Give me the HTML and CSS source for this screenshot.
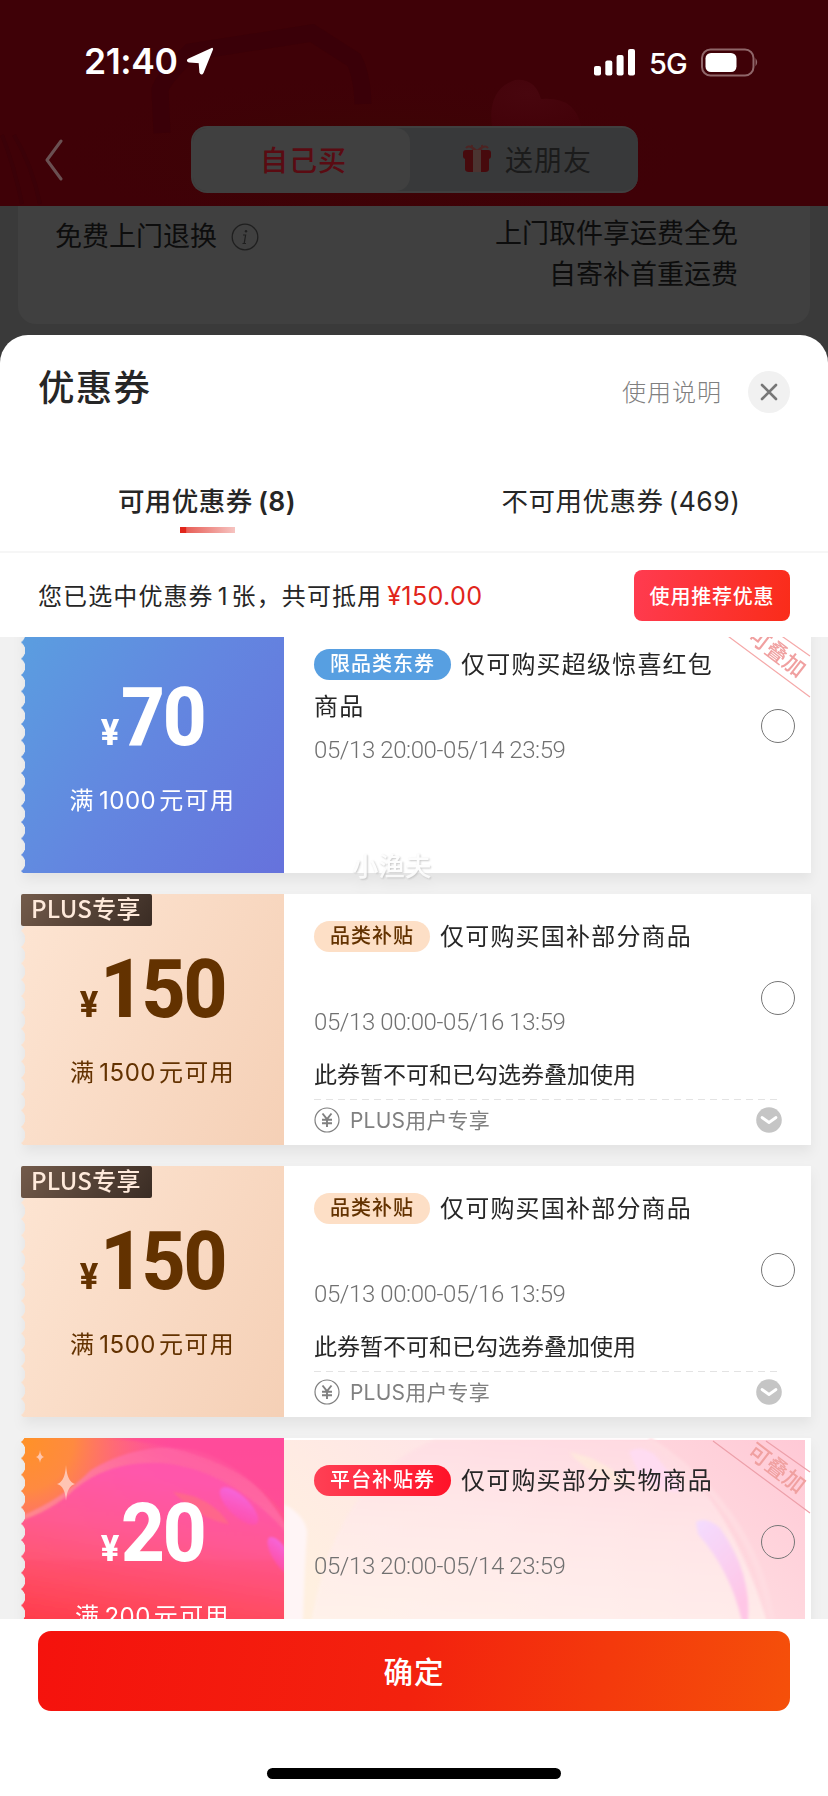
FILE: index.html
```html
<!DOCTYPE html>
<html lang="zh-CN">
<head>
<meta charset="utf-8">
<title>优惠券</title>
<link rel="stylesheet" href="styles.css">
</head>
<body>
<header class="top">
  <svg class="top-art" width="828" height="206" viewBox="0 0 828 206" aria-hidden="true">
    <defs>
      <radialGradient id="warm" cx=".45" cy=".75" r=".4"><stop offset="0" stop-color="#3c0703"/><stop offset="1" stop-color="#3f0107" stop-opacity="0"/></radialGradient>
      <radialGradient id="heart" cx=".4" cy=".3" r=".8"><stop offset="0" stop-color="#48060e"/><stop offset="1" stop-color="#430209"/></radialGradient>
    </defs>
    <rect width="828" height="206" fill="url(#warm)"/>
    <path d="M162 133 L160 90 Q162 80 190 52 L312 33 L354 60 Q362 75 363 104" fill="none" stroke="#3a0008" stroke-width="17"/>
    <path d="M492 126 Q487 90 515 80 Q535 78 541 99 Q575 96 581 126 Z" fill="url(#heart)"/>
    <path d="M2 135 Q14 165 22 204 M14 135 Q32 165 40 204" stroke="#3b0108" stroke-width="4" fill="none"/>
  </svg>
  <div class="status">
    <span class="clock">21:40</span>
    <svg class="loc" width="30" height="30" viewBox="0 0 30 30"><path d="M27 2 L17.5 25.5 Q16.5 27.5 15.5 25.3 L14.7 15.2 L4.3 14.5 Q1.8 13.5 4 12.4 Z" fill="#fff" stroke="#fff" stroke-width="2.2" stroke-linejoin="round"/></svg>
    <svg class="signal" width="42" height="27" viewBox="0 0 42 27" fill="#fff"><rect x="0" y="17" width="7" height="9.5" rx="2"/><rect x="11.3" y="11.5" width="7" height="15" rx="2"/><rect x="22.6" y="6" width="7" height="20.5" rx="2"/><rect x="34" y="0" width="7" height="26.5" rx="2"/></svg>
    <span class="net">5G</span>
    <svg class="battery" width="59" height="29" viewBox="0 0 59 29"><rect x="1" y="1.5" width="51.500" height="26" rx="8.500" fill="none" stroke="#8f6669" stroke-width="2"/><rect x="4.500" y="5" width="31" height="19" rx="5.500" fill="#fff"/><path d="M54.500 10 Q58 14.500 54.500 18.500Z" fill="#8f6669"/></svg>
  </div>
  <div class="nav">
    <svg class="back" width="20" height="42" viewBox="0 0 20 42"><path d="M17 2 L3 21 L17 40" fill="none" stroke="#6a5052" stroke-width="3" stroke-linecap="round" stroke-linejoin="round"/></svg>
    <div class="segment">
      <div class="seg seg-on">自己买</div>
      <div class="seg seg-off">
        <svg width="28" height="29" viewBox="0 0 28 29"><path d="M14 7 Q6 0 3 4 M14 7 Q22 0 25 4 M14 7 Q8 6 9 1 M14 7 Q20 6 19 1" fill="none" stroke="#4d2322" stroke-width="2"/><rect x="0" y="6" width="28" height="9" rx="3" fill="#470a0d"/><path d="M2 14 H26 V25 Q26 28 22 28 H6 Q2 28 2 25Z" fill="#470a0d"/><rect x="10" y="6" width="8" height="22" fill="#4b3431"/></svg>
        <span>送朋友</span>
      </div>
    </div>
  </div>
</header>

<section class="behind">
  <div class="behind-card">
    <div class="service">免费上门退换
      <svg width="28" height="28" viewBox="0 0 28 28"><circle cx="14" cy="14" r="12.800" fill="none" stroke="#1f1f1f" stroke-width="1.300"/><circle cx="15" cy="8.300" r="1.200" fill="#1f1f1f"/><path d="M12 12 H14.600 L13.200 20.300 M11.500 20.500 H15" fill="none" stroke="#1f1f1f" stroke-width="1.200"/></svg>
    </div>
    <div class="policy">上门取件享运费全免<br>自寄补首重运费</div>
  </div>
</section>

<main class="sheet">
  <div class="sheet-head">
    <h1>优惠券</h1>
    <span class="help">使用说明</span>
    <span class="close"><svg width="18" height="18" viewBox="0 0 18 18"><path d="M2 2 L16 16 M16 2 L2 16" stroke="#777" stroke-width="2.600" stroke-linecap="round"/></svg></span>
  </div>
  <nav class="tabs">
    <div class="tab tab-on"><span>可用优惠券<b>(8)</b></span><i></i></div>
    <div class="tab"><span>不可用优惠券<b>(469)</b></span></div>
  </nav>
  <div class="summary">
    <p>您已选中优惠券<span class="one">1</span>张，共可抵用<span class="sum">¥150.00</span></p>
    <span class="recommend">使用推荐优惠</span>
  </div>

  <div class="list">
    <article class="coupon blue">
      <div class="face">
        <div class="amount"><small>¥</small>70</div>
        <div class="cond">满<span>1000</span>元可用</div>
      </div>
      <div class="info">
        <div class="name"><em>限品类东券</em>仅可购买超级惊喜红包<br>商品</div>
        <div class="date">05/13 20:00-05/14 23:59</div>
        <span class="radio"></span>
        <svg class="stack" width="100" height="78" viewBox="0 0 100 78"><path d="M2 3 L99 75 M55 3 L99 34" stroke="#f5a9a9" stroke-width="1.200"/><text x="66" y="38" transform="rotate(37.500 66 30)" text-anchor="middle">可叠加</text></svg>
      </div>
      <span class="mark">小渔夫</span>
    </article>

    <article class="coupon plus">
      <div class="face">
        <div class="amount"><small>¥</small>150</div>
        <div class="cond">满<span>1500</span>元可用</div>
      </div>
      <span class="badge">PLUS专享</span>
      <div class="info">
        <div class="name"><em>品类补贴</em>仅可购买国补部分商品</div>
        <div class="date">05/13 00:00-05/16 13:59</div>
        <div class="note">此券暂不可和已勾选券叠加使用</div>
        <div class="limit">
          <svg width="26" height="26" viewBox="0 0 26 26" fill="none" stroke="#808080"><circle cx="13" cy="13" r="12" stroke-width="1.200"/><path d="M8.500 6.500 L13 12.200 L17.500 6.500 M13 12.200 V20 M8 12.700 H18 M8 16.300 H18" stroke-width="1.900"/></svg>
          <span>PLUS用户专享</span>
          <svg width="26" height="26" viewBox="0 0 26 26"><circle cx="13" cy="13" r="12.800" fill="#c5c5c5"/><path d="M6 10.500 L13 15.500 L20 10.500" fill="none" stroke="#fff" stroke-width="2.800" stroke-linecap="round" stroke-linejoin="round"/></svg>
        </div>
        <span class="radio"></span>
      </div>
    </article>

    <article class="coupon plus">
      <div class="face">
        <div class="amount"><small>¥</small>150</div>
        <div class="cond">满<span>1500</span>元可用</div>
      </div>
      <span class="badge">PLUS专享</span>
      <div class="info">
        <div class="name"><em>品类补贴</em>仅可购买国补部分商品</div>
        <div class="date">05/13 00:00-05/16 13:59</div>
        <div class="note">此券暂不可和已勾选券叠加使用</div>
        <div class="limit">
          <svg width="26" height="26" viewBox="0 0 26 26" fill="none" stroke="#808080"><circle cx="13" cy="13" r="12" stroke-width="1.200"/><path d="M8.500 6.500 L13 12.200 L17.500 6.500 M13 12.200 V20 M8 12.700 H18 M8 16.300 H18" stroke-width="1.900"/></svg>
          <span>PLUS用户专享</span>
          <svg width="26" height="26" viewBox="0 0 26 26"><circle cx="13" cy="13" r="12.800" fill="#c5c5c5"/><path d="M6 10.500 L13 15.500 L20 10.500" fill="none" stroke="#fff" stroke-width="2.800" stroke-linecap="round" stroke-linejoin="round"/></svg>
        </div>
        <span class="radio"></span>
      </div>
    </article>

    <article class="coupon red">
      <div class="face">
        <svg class="art" width="263" height="251" viewBox="0 0 263 251" aria-hidden="true">
          <defs>
            <linearGradient id="base" x1="0" y1="0" x2="0" y2="1"><stop offset="0" stop-color="#ff4fa0"/><stop offset=".3" stop-color="#ff5590"/><stop offset=".52" stop-color="#ff4a64"/><stop offset=".72" stop-color="#ff3a45"/></linearGradient>
            <radialGradient id="sun" gradientUnits="userSpaceOnUse" cx="0" cy="0" r="150"><stop offset="0" stop-color="#ff9226"/><stop offset=".35" stop-color="#ff8a40"/><stop offset="1" stop-color="#ff6b7a" stop-opacity="0"/></radialGradient>
            <linearGradient id="band" x1="0" y1="1" x2="1" y2="0"><stop offset="0" stop-color="#ff9c92" stop-opacity=".75"/><stop offset=".5" stop-color="#ff7bb2" stop-opacity=".7"/><stop offset="1" stop-color="#ff5a98" stop-opacity=".7"/></linearGradient>
            <linearGradient id="disc" x1=".2" y1="0" x2="0" y2="1"><stop offset="0" stop-color="#ff55ac"/><stop offset=".25" stop-color="#ff5692"/><stop offset=".5" stop-color="#ff4f68"/><stop offset=".72" stop-color="#ff3b48"/></linearGradient>
            <linearGradient id="petal" x1="0" y1="0" x2="1" y2="1"><stop offset="0" stop-color="#f36be6"/><stop offset="1" stop-color="#ff4aae" stop-opacity=".6"/></linearGradient>
            <filter id="soft"><feGaussianBlur stdDeviation="1"/></filter>
          </defs>
          <rect width="263" height="251" fill="url(#base)"/>
          <rect width="263" height="251" fill="url(#sun)"/>
          <path d="M0 78 Q40 62 70 32 Q120 2 175 12 Q232 28 268 92 V122 H0Z" fill="url(#band)" filter="url(#soft)"/>
          <path d="M85 0 H263 V76 Q215 10 85 0Z" fill="#ff4898" opacity=".6" filter="url(#soft)"/>
          <path d="M-5 84 Q30 74 55 50 Q90 22 142 25 Q215 32 275 106 V251 H-5Z" fill="url(#disc)" filter="url(#soft)" opacity=".9"/>
          <path d="M152 54 Q190 58 208 86 Q180 82 152 54Z" fill="#ff6a86" opacity=".8" filter="url(#soft)"/>
          <ellipse cx="218" cy="68" rx="25" ry="10" transform="rotate(44 218 68)" fill="url(#petal)" filter="url(#soft)"/>
          <ellipse cx="260" cy="118" rx="22" ry="8" transform="rotate(58 260 118)" fill="url(#petal)" filter="url(#soft)"/>
          <path d="M45 27 Q46 44 54 46 Q46 48 45 63 Q44 48 36 46 Q44 44 45 27Z M19 12 Q19.500 18 23 19 Q19.500 20 19 25 Q18.500 20 15 19 Q18.500 18 19 12Z" fill="#ffd0c4" opacity=".85"/>
        </svg>
        <div class="amount"><small>¥</small>20</div>
        <div class="cond">满<span>200</span>元可用</div>
      </div>
      <div class="info">
        <svg class="art" width="527" height="251" viewBox="0 0 527 251" aria-hidden="true">
          <defs>
            <linearGradient id="pale" x1="0" y1=".5" x2="1" y2="0"><stop offset="0" stop-color="#fff0e0"/><stop offset=".4" stop-color="#ffe6e6"/><stop offset="1" stop-color="#ffc9d6"/></linearGradient>
            <linearGradient id="glow" x1=".4" y1="0" x2=".3" y2="1"><stop offset="0" stop-color="#ffdde4"/><stop offset=".35" stop-color="#ffeaea"/><stop offset=".75" stop-color="#fff3ee"/></linearGradient>
            <linearGradient id="lilac" x1="0" y1="0" x2=".5" y2="1"><stop offset="0" stop-color="#f3dcff"/><stop offset="1" stop-color="#ffc6e6"/></linearGradient>
            <filter id="haze"><feGaussianBlur stdDeviation="1.500"/></filter>
          </defs>
          <rect y="2" width="521" height="249" fill="url(#pale)"/>
          <path d="M20 251 Q30 50 150 2 H365 Q460 60 500 251Z" fill="url(#glow)" filter="url(#haze)" opacity=".75"/>
          <path d="M0 251 V66 Q22 78 23 95 Q20 130 17 251Z" fill="#fff5f6" filter="url(#haze)"/>
          <path d="M285 14 Q320 20 350 50 Q310 42 285 14Z" fill="#ffedda" opacity=".7" filter="url(#haze)"/>
          <path d="M345 14 Q355 6 370 16 L400 52 Q385 60 355 36Z" fill="#ffdcf5" opacity=".8" filter="url(#haze)"/>
          <path d="M412 84 Q422 78 436 90 Q468 135 464 183 H458 Q446 132 414 96Z" fill="url(#lilac)" filter="url(#haze)"/>
          <path d="M365 2 Q470 70 488 183" fill="none" stroke="#ffdce1" stroke-width="6" filter="url(#haze)"/>
        </svg>
        <div class="name"><em>平台补贴券</em>仅可购买部分实物商品</div>
        <div class="date">05/13 20:00-05/14 23:59</div>
        <span class="radio"></span>
        <svg class="stack" width="100" height="78" viewBox="0 0 100 78"><path d="M2 3 L99 75 M55 3 L99 34" stroke="#eda0aa" stroke-width="1.200"/><text x="66" y="38" transform="rotate(37.500 66 30)" text-anchor="middle">可叠加</text></svg>
      </div>
    </article>
  </div>

  <footer class="actions">
    <div class="confirm">确定</div>
    <div class="home"></div>
  </footer>
</main>
</body>
</html>
```

FILE: styles.css
```css
* { box-sizing: border-box; margin: 0; padding: 0; }

body {
  width: 828px;
  height: 1796px;
  overflow: hidden;
  display: flex;
  flex-direction: column;
  background: #3a3a3a;
  color: #262626;
  font-family: Inter, "Noto Sans CJK SC", sans-serif;
  white-space: nowrap;
}

svg { display: block; flex: none; }

/* Header */
.top { position: relative; height: 206px; background: #3f0107; flex: none; }
.top-art { position: absolute; inset: 0; }
.status { position: relative; display: flex; align-items: center; height: 124px; padding-left: 84px; color: #fff; }
.clock { font-size: 35.5px; font-weight: 600; letter-spacing: -0.4px; width: 101px; padding-bottom: 1px; }
.loc { margin-right: 379px; }
.signal { margin-right: 13px; }
.net { font-size: 29px; font-weight: 500; width: 52px; letter-spacing: -1px; padding-top: 2px; }
.nav { position: relative; display: flex; align-items: center; padding: 2px 0 0 44px; height: 69px; }
.back { margin-right: 127px; }
.segment { display: flex; width: 447px; height: 67px; border-radius: 16px; background: #38393a; overflow: hidden; border: 2px solid #404040; border-right: 0; }
.seg { display: flex; align-items: center; font-size: 28px; letter-spacing: 1px; padding-bottom: 2px; }
.seg-on { width: 217px; padding-left: 67px; background: #404040; color: #5a0b12; border-radius: 14px; font-weight: 500; }
.seg-off { flex: 1; padding-left: 53px; gap: 14px; color: #1b1b1b; }

/* Dimmed page */
.behind { height: 129px; flex: none; padding: 0 18px; }
.behind-card { height: 118px; background: #404040; border-radius: 0 0 18px 18px; display: flex; justify-content: space-between; padding: 8px 72px 0 37px; color: #0d0d0d; font-size: 27px; line-height: 40.5px; }
.service { display: flex; align-items: center; gap: 14px; height: 46px; }
.policy { text-align: right; }

/* Sheet */
.sheet { flex: 1; display: flex; flex-direction: column; min-height: 0; background: #fff; border-radius: 28px 28px 0 0; }
.sheet-head { height: 104px; flex: none; display: flex; align-items: center; padding: 0 38px; }
.sheet-head h1 { font-size: 36.500px; font-weight: 500; letter-spacing: 1.300px; flex: 1; margin-top: -4px; }
.help { font-size: 24px; color: #808080; letter-spacing: 1px; margin: 7px 26px 0 0; font-weight: 300; }
.close { width: 42px; height: 42px; border-radius: 50%; background: #f1f1f1; display: flex; align-items: center; justify-content: center; margin-top: 10px; }
.tabs { height: 114px; flex: none; display: flex; border-bottom: 2px solid #f6f6f6; }
.tab { width: 414px; padding: 41px 0 0 0; font-size: 26.500px; line-height: 42px; letter-spacing: .5px; display: flex; flex-direction: column; align-items: center; }
.tab b { font-weight: inherit; margin-left: 5px; }
.tab-on { font-weight: 500; }
.tab-on b { font-weight: 600; }
.tab i { width: 55px; height: 6px; margin-top: 5px; background: linear-gradient(90deg, #e1251b 0 11%, #e85f58 12%, #f6c4c1); }
.summary { height: 84px; flex: none; display: flex; align-items: center; justify-content: space-between; padding: 0 38px; font-size: 24px; letter-spacing: 1.100px; }
.summary p { padding-bottom: 2px; }
.one { margin: 0 3px 0 4px; }
.sum { color: #e1251b; margin-left: 5px; font-size: 25.200px; letter-spacing: .3px; }
.recommend { width: 156px; height: 51px; border-radius: 8px; background: linear-gradient(100deg, #ff3b50, #fa2c19); color: #fff; font-size: 20px; font-weight: 500; letter-spacing: .8px; display: flex; align-items: center; justify-content: center; }

/* Coupons */
.list { height: 982px; flex: none; overflow: hidden; background: #f1f1f1; padding: 0 17px 0 21px; }
.coupon { position: relative; display: flex; height: 251px; margin-bottom: 21px; filter: drop-shadow(0 7px 6px rgba(0, 0, 0, .055)); }
.coupon:first-child { margin-top: -15px; }
.face {
  position: relative; width: 263px; flex: none; padding-top: 54px; text-align: center; color: #fff;
  -webkit-mask: radial-gradient(circle 10px at -5.500px 50%, transparent 9.500px, #000 10px) 0 4px / 100% 16.350px;
  mask: radial-gradient(circle 10px at -5.500px 50%, transparent 9.500px, #000 10px) 0 4px / 100% 16.350px;
}
.blue .face { background: linear-gradient(125deg, #5a9fe0, #6386e0 50%, #6672dc); }
.plus .face { background: linear-gradient(115deg, #fde5d3, #f5d0b6); color: #633200; }
.art { position: absolute; left: 0; top: 0; }
.amount { position: relative; font-family: Roboto, sans-serif; font-weight: 800; font-size: 82px; line-height: 82px; letter-spacing: -2.500px; transform: scaleX(.93); }
.amount small { font-size: 37px; letter-spacing: 0; margin-right: 2px; font-weight: 800; }
.cond { position: relative; font-size: 24px; letter-spacing: 1.400px; line-height: 40px; margin-top: 7px; }
.cond span { margin: 0 3px 0 4px; letter-spacing: .5px; }
.badge { position: absolute; left: 0; top: 0; width: 131px; height: 32px; line-height: 28px; padding-left: 10px; border-radius: 2px; background: linear-gradient(125deg, #735b4b, #3a2c24); color: #ffeadb; font-family: "Noto Sans CJK SC", sans-serif; font-size: 24px; font-weight: 500; letter-spacing: .3px; }
.info { position: relative; flex: 1; background: #fff; padding: 22px 30px 0; overflow: hidden; }
.name { position: relative; height: 85px; font-size: 24px; letter-spacing: 1.200px; line-height: 42px; }
.name em { display: inline-block; height: 31px; line-height: 31px; border-radius: 16px; padding: 0 16px; margin-right: 10px; font-style: normal; font-weight: 500; font-size: 20px; letter-spacing: 1px; background: #579fe1; color: #fff; vertical-align: 2px; }
.plus em { background: #fddfc6; color: #633200; }
.red em { background: linear-gradient(90deg, #ff4055, #ff1228); }
.date { position: relative; font-family: Roboto, sans-serif; font-weight: 300; font-size: 24px; line-height: 42px; color: #707070; letter-spacing: -.4px; }
.note { font-size: 23px; line-height: 40px; margin-top: 12px; height: 44px; }
.limit { display: flex; align-items: center; height: 42px; background: repeating-linear-gradient(90deg, #e3e3e3 0 7px, transparent 7px 12px) 0 0 / 100% 1px no-repeat; width: 468px; font-size: 21px; color: #808080; }
.limit span { flex: 1; padding: 0 0 3px 10px; letter-spacing: .2px; }
.radio { position: absolute; left: 477px; top: 87px; width: 34px; height: 34px; border: 1.500px solid #777; border-radius: 50%; }
.stack { position: absolute; right: 0; top: 0; }
.stack text { font-size: 22px; fill: #f0a0a0; font-weight: 500; }
.mark { position: absolute; left: 331px; top: 224px; font-size: 26.500px; line-height: 40px; color: #fdfdfd; text-shadow: 1px 1px 2px #bbb; font-weight: 500; opacity: .8; }

/* Bottom bar */
.actions { flex: 1; background: #fff; padding: 12px 38px 0; display: flex; flex-direction: column; align-items: center; }
.confirm { width: 752px; height: 80px; border-radius: 13px; background: linear-gradient(100deg, #f5120d, #f3220e 50%, #f5500a); color: #fff; font-size: 29.500px; font-weight: 500; letter-spacing: 1px; display: flex; align-items: center; justify-content: center; padding-bottom: 2px; }
.home { width: 294px; height: 11px; border-radius: 6px; background: #000; margin-top: 57px; }
```
